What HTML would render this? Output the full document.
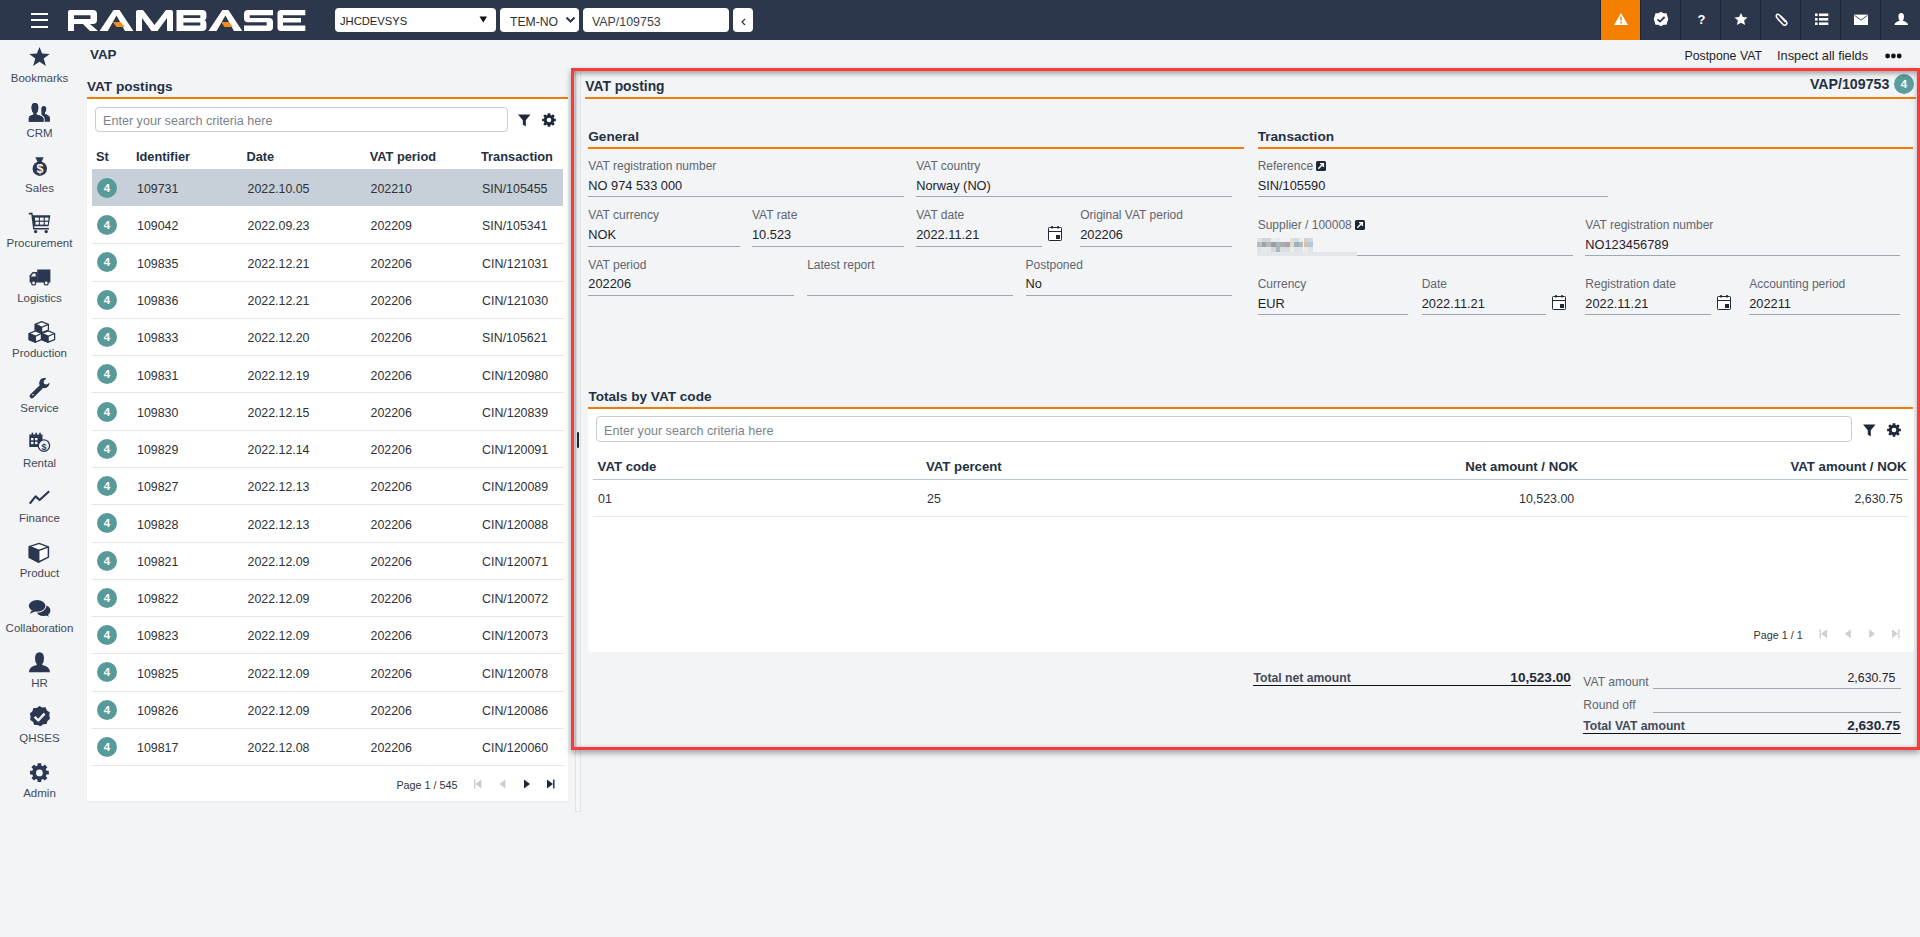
<!DOCTYPE html>
<html><head><meta charset="utf-8">
<style>
*{box-sizing:border-box;margin:0;padding:0}
html,body{width:1920px;height:937px;overflow:hidden;background:#f3f4f6;font-family:"Liberation Sans",sans-serif;color:#333}
.a{position:absolute}
.t{position:absolute;white-space:nowrap;line-height:20px;height:20px}
svg{position:absolute;overflow:visible}
#top{left:0;top:0;width:1920px;height:40px;background:#2d374b}
.sel{background:#fff;border-radius:4px;height:24px;top:8px}
.sep{top:0;width:1px;height:40px;background:#1f2838}
.badge{width:20px;height:20px;border-radius:50%;background:#58999a;color:#fff;font-weight:bold;font-size:11.5px;text-align:center;line-height:20px}
</style></head><body>
<div id="top" class="a">
  <!-- hamburger -->
  <div class="a" style="left:31px;top:13px;width:17px;height:2px;background:#fff"></div>
  <div class="a" style="left:31px;top:19px;width:17px;height:2px;background:#fff"></div>
  <div class="a" style="left:31px;top:26px;width:17px;height:2px;background:#fff"></div>
  <!-- logo -->
  <svg class="a" style="left:0;top:0" width="320" height="40" viewBox="0 0 320 40">
   <g fill="#fff">
    <!-- R -->
    <path d="M68 12 Q68 10 70 10 H93 Q97 10 97 14 V20 Q97 24 93 24 H90 L98 31 H90 L83 24 H74 V31 H68 Z M74 15.3 V19 H90.5 V15.3 Z" fill-rule="evenodd"/>
    <!-- A -->
    <path d="M99.6 31 L113.5 10 H119.5 L133.4 31 H125 L116.5 15.6 L107.8 31 Z"/>
    <!-- M -->
    <path d="M136 12 Q136 10 138 10 H143 L154.5 25 L166 10 H171 Q173 10 173 12 V31 H167 V18 L157.5 31 H151.5 L142 18 V31 H136 Z"/>
    <!-- B -->
    <path d="M176.5 10 H202 Q206.4 10 206.4 14 V17 Q206.4 20 204 20.3 Q206.4 20.6 206.4 24 V27 Q206.4 31 202 31 H176.5 Z M183.4 15.2 V17.9 H200.3 V15.2 Z M183.4 22.6 V25.6 H200.3 V22.6 Z" fill-rule="evenodd"/>
    <!-- A2 -->
    <path d="M208.4 31 L222.4 10 H228.4 L242.3 31 H234 L225.4 15.6 L216.6 31 Z"/>
    <!-- S -->
    <path d="M248 10 H273 V15.2 H249.7 V17.9 H269 Q273 17.9 273 22 V27 Q273 31 269 31 H244 V25.6 H266.7 V22.3 H248 Q244 22.3 244 18 V14 Q244 10 248 10 Z"/>
    <!-- E -->
    <path d="M281 10 H305.3 V15.2 H283 V17.9 H301 V22.6 H283 V25.6 H305.3 V31 H281 Q277.5 31 277.5 27.5 V13.5 Q277.5 10 281 10 Z"/>
   </g>
   <g fill="#f58a1f">
    <path d="M112.8 21.9 H120.5 L124.6 26.9 H116.5 Z"/>
    <path d="M221 21.9 H228.7 L232.8 26.9 H224.6 Z"/>
   </g>
  </svg>
  <!-- selects -->
  <div class="a sel" style="left:335px;width:161px"></div>
  <div class="t" style="left:340px;top:10.7px;font-size:11.2px;color:#222">JHCDEVSYS</div>
  <svg class="a" style="left:479px;top:16px" width="9" height="7"><path d="M0.5 0.5 H8 L4.25 6.5 Z" fill="#111"/></svg>
  <div class="a sel" style="left:500px;width:79px"></div>
  <div class="t" style="left:510px;top:12px;font-size:12.2px;color:#333">TEM-NO</div>
  <svg class="a" style="left:565px;top:16px" width="11" height="8"><path d="M1.5 1.5 L5.5 5.5 L9.5 1.5" stroke="#2c364a" stroke-width="2" fill="none"/></svg>
  <div class="a sel" style="left:583px;width:146px"></div>
  <div class="t" style="left:592px;top:12px;font-size:12.4px;color:#3a3f4a">VAP/109753</div>
  <div class="a sel" style="left:733px;width:20px"></div>
  <svg class="a" style="left:740px;top:18px" width="7" height="8"><path d="M5 1 L2 4 L5 7" stroke="#333" stroke-width="1.2" fill="none"/></svg>
  <!-- right icons -->
  <div class="a" style="left:1601px;top:0;width:39px;height:40px;background:#f58000"></div>
  <div class="a sep" style="left:1600px"></div>
  <div class="a sep" style="left:1640px"></div>
  <div class="a sep" style="left:1680px"></div>
  <div class="a sep" style="left:1720px"></div>
  <div class="a sep" style="left:1760px"></div>
  <div class="a sep" style="left:1800px"></div>
  <div class="a sep" style="left:1840px"></div>
  <div class="a sep" style="left:1880px"></div>
  <svg class="a" style="left:0;top:0" width="1920" height="40" viewBox="0 0 1920 40">
   <!-- warning -->
   <path d="M1621 12.9 L1628 25 H1614 Z" fill="#fff"/>
   <rect x="1620.2" y="16.5" width="1.6" height="4" fill="#f58000"/><rect x="1620.2" y="21.8" width="1.6" height="1.6" fill="#f58000"/>
   <!-- badge check -->
   <path d="M1661 11.8 L1663.6 13.3 L1666.5 13.2 L1667.3 16.1 L1668.3 19 L1667.3 21.9 L1666.5 24.8 L1663.6 24.7 L1661 26.2 L1658.4 24.7 L1655.5 24.8 L1654.7 21.9 L1653.8 19 L1654.7 16.1 L1655.5 13.2 L1658.4 13.3 Z" fill="#fff"/>
   <path d="M1657.5 19.3 L1660 21.6 L1664.6 17" stroke="#2c364a" stroke-width="1.8" fill="none"/>
   <!-- question -->
   <text x="1701.6" y="24" font-family="Liberation Sans" font-weight="bold" font-size="13" fill="#fff" text-anchor="middle">?</text>
   <!-- star -->
   <path d="M1741 13 L1742.9 17.1 L1747.5 17.6 L1744.1 20.6 L1745.1 25 L1741 22.7 L1736.9 25 L1737.9 20.6 L1734.5 17.6 L1739.1 17.1 Z" fill="#fff"/>
   <!-- paperclip -->
   <path d="M1785.5 22 L1779.5 15.2 Q1777 13 1776.3 15.6 Q1776 17 1777.5 18.5 L1783 24.5 Q1785 26 1786.3 24.5 Q1787.5 23 1786 21.3 L1780.5 15.8" stroke="#fff" stroke-width="1.6" fill="none"/>
   <!-- list -->
   <g fill="#fff"><rect x="1815" y="13.5" width="2.6" height="2.6"/><rect x="1815" y="18" width="2.6" height="2.6"/><rect x="1815" y="22.4" width="2.6" height="2.6"/>
   <rect x="1819" y="13.5" width="9.3" height="2.6"/><rect x="1819" y="18" width="9.3" height="2.6"/><rect x="1819" y="22.4" width="9.3" height="2.6"/></g>
   <!-- envelope -->
   <rect x="1854" y="14.6" width="14" height="10.4" fill="#fff"/>
   <path d="M1854.5 15.3 L1861 20.2 L1867.5 15.3" stroke="#2c364a" stroke-width="0.9" fill="none"/>
   <!-- person -->
   <path d="M1901.2 13 Q1904 13 1904 16.5 Q1904 19.5 1902.8 20.8 Q1907.8 22 1908 25 H1894.5 Q1894.7 22 1899.6 20.8 Q1898.4 19.5 1898.4 16.5 Q1898.4 13 1901.2 13 Z" fill="#fff"/>
  </svg>
</div>
<div class="t" style="left:0;width:79px;text-align:center;top:68.01px;font-size:11.5px;color:#3f4859">Bookmarks</div>
<div class="t" style="left:0;width:79px;text-align:center;top:123.01px;font-size:11.5px;color:#3f4859">CRM</div>
<div class="t" style="left:0;width:79px;text-align:center;top:178.01px;font-size:11.5px;color:#3f4859">Sales</div>
<div class="t" style="left:0;width:79px;text-align:center;top:233.01px;font-size:11.5px;color:#3f4859">Procurement</div>
<div class="t" style="left:0;width:79px;text-align:center;top:288.01px;font-size:11.5px;color:#3f4859">Logistics</div>
<div class="t" style="left:0;width:79px;text-align:center;top:343.01px;font-size:11.5px;color:#3f4859">Production</div>
<div class="t" style="left:0;width:79px;text-align:center;top:398.01px;font-size:11.5px;color:#3f4859">Service</div>
<div class="t" style="left:0;width:79px;text-align:center;top:453.01px;font-size:11.5px;color:#3f4859">Rental</div>
<div class="t" style="left:0;width:79px;text-align:center;top:508.01px;font-size:11.5px;color:#3f4859">Finance</div>
<div class="t" style="left:0;width:79px;text-align:center;top:563.01px;font-size:11.5px;color:#3f4859">Product</div>
<div class="t" style="left:0;width:79px;text-align:center;top:618.01px;font-size:11.5px;color:#3f4859">Collaboration</div>
<div class="t" style="left:0;width:79px;text-align:center;top:673.01px;font-size:11.5px;color:#3f4859">HR</div>
<div class="t" style="left:0;width:79px;text-align:center;top:728.01px;font-size:11.5px;color:#3f4859">QHSES</div>
<div class="t" style="left:0;width:79px;text-align:center;top:783.01px;font-size:11.5px;color:#3f4859">Admin</div>
<svg class="a" style="left:0;top:0" width="80" height="800" viewBox="0 0 80 800">
<g fill="#2b3750">
 <!-- star -->
 <path d="M39.5 47 L42.1 53.6 L49.7 53.9 L43.7 58.5 L45.9 66 L39.5 61.7 L33.1 66 L35.3 58.5 L29.3 53.9 L36.9 53.6 Z"/>
 <!-- CRM users -->
 <path d="M43.8 105.9 Q46.3 105.9 46.3 108.8 Q46.3 111.6 45 112.6 V113.8 L47.6 114.9 Q50 115.9 50 118.3 V121.7 H41.5 V114 Q41.3 111.5 41.3 108.8 Q41.3 105.9 43.8 105.9 Z"/>
 <path d="M28.8 121.7 V118.3 Q28.8 116.2 31 115.5 L33.6 114.6 V113.2 Q31.6 111.6 31.6 107.2 Q31.6 102.9 34.95 102.9 Q38.3 102.9 38.3 107.2 Q38.3 111.6 36.3 113.2 V114.6 L39.8 115.5 Q43.4 116.6 43.6 119 V121.7 Z" stroke="#f3f4f6" stroke-width="2.2" paint-order="stroke"/>
 <path d="M28.8 121.7 V118.3 Q28.8 116.2 31 115.5 L33.6 114.6 V113.2 Q31.6 111.6 31.6 107.2 Q31.6 102.9 34.95 102.9 Q38.3 102.9 38.3 107.2 Q38.3 111.6 36.3 113.2 V114.6 L39.8 115.5 Q43.4 116.6 43.6 119 V121.7 Z"/>
 <!-- Sales bag -->
 <path d="M35.4 157.2 H43.6 L41.6 162 H37.6 Z"/>
 <circle cx="39.8" cy="168.7" r="7.2"/>
 <!-- Cart -->
 <path d="M28.8 212.8 H32.3 L33 215.3 H50.4 L48.6 226.3 H34.2 L34.5 228 H49 V229.6 H33.2 L31.3 214.6 H28.8 Z"/>
 <circle cx="35.6" cy="231.6" r="1.7"/><circle cx="46.2" cy="231.6" r="1.7"/>
 <!-- Truck -->
 <path d="M37.2 269.5 H50.4 V282.5 H37.2 Z"/>
 <path d="M29.6 275.5 L32.6 272.1 H37.5 V282.5 H29.6 Z"/>
 <circle cx="33.6" cy="283" r="2.6"/><circle cx="46.2" cy="283" r="2.6"/>
 <!-- Wrench -->
 <path d="M31 394.6 L40.5 385.1 L42.9 387.5 L33.4 397 Q32.2 398.2 31 397 Q29.8 395.8 31 394.6 Z"/>
 <circle cx="44.3" cy="383.2" r="5.1"/><path d="M31.8 396.1 L40.6 387.5" stroke="#2b3750" stroke-width="4.4" stroke-linecap="round"/>
 <!-- Rental -->
 <path d="M29.3 434.6 H42.5 V440.5 Q38.6 442.5 38.5 447 H29.3 Z"/>
 <rect x="31.6" y="432.7" width="1.6" height="3" /><rect x="35.4" y="432.7" width="1.6" height="3"/><rect x="39.2" y="432.7" width="1.6" height="3"/>
 <circle cx="43.9" cy="445.6" r="5.7" fill="none" stroke="#2b3750" stroke-width="1.3"/>
 <!-- Finance -->
 <path d="M29.8 503.6 L35.6 496.4 L39.6 500 L49.2 491.2" fill="none" stroke="#2b3750" stroke-width="2.2" stroke-linejoin="round"/>
 <!-- Collaboration -->
 <ellipse cx="43.4" cy="610.5" rx="7" ry="5.6"/>
 <path d="M45 614.8 L48.8 616.7 L47.6 613.4 Z"/>
 <ellipse cx="37.15" cy="605.8" rx="8.35" ry="5.9" stroke="#f3f4f6" stroke-width="2" paint-order="stroke"/>
 <path d="M31.8 610.2 L29.8 613.8 L35.5 611.3 Z"/>
 <!-- HR -->
 <path d="M39.5 652.2 Q44 652.2 44 658.2 Q44 662.2 42.3 664 V665 Q49.9 666.6 49.9 672.2 H29 Q29 666.6 36.7 665 V664 Q35 662.2 35 658.2 Q35 652.2 39.5 652.2 Z"/>
 <!-- QHSES badge -->
 <path d="M39.4 705.9 L42.3 707.5 L45.6 707.3 L46.9 710.4 L49.7 712.3 L49.2 715.6 L50.1 718.8 L47.5 720.9 L46.5 724.1 L43.2 724.3 L40.6 726.3 L37.6 724.9 L34.3 724.9 L33 721.8 L30.2 719.9 L30.6 716.6 L29.8 713.4 L32.4 711.3 L33.4 708.1 L36.7 707.9 Z"/>
 <!-- Admin gear -->
 <path d="M37.56 765.54 L37.53 763.18 L41.27 763.18 L41.24 765.54 L43.09 766.30 L44.73 764.62 L47.38 767.27 L45.70 768.91 L46.46 770.76 L48.82 770.73 L48.82 774.47 L46.46 774.44 L45.70 776.29 L47.38 777.93 L44.73 780.58 L43.09 778.90 L41.24 779.66 L41.27 782.02 L37.53 782.02 L37.56 779.66 L35.71 778.90 L34.07 780.58 L31.42 777.93 L33.10 776.29 L32.34 774.44 L29.98 774.47 L29.98 770.73 L32.34 770.76 L33.10 768.91 L31.42 767.27 L34.07 764.62 L35.71 766.30 Z"/>
</g>
<!-- white details -->
<g fill="#f3f4f6">
 <circle cx="46.1" cy="382.2" r="2.4"/><path d="M44.4 380.4 L47.5 377 L51 380.6 L47.9 383.9 Z"/><circle cx="33" cy="394.7" r="0.8"/>
 <text x="39.9" y="173.3" font-family="Liberation Sans" font-weight="bold" font-size="12.5" text-anchor="middle" fill="#f3f4f6">$</text>
 <rect x="35" y="217.6" width="3.8" height="3" /><rect x="39.9" y="217.6" width="3.8" height="3"/><rect x="44.8" y="217.6" width="3.6" height="3"/>
 <rect x="35.5" y="221.8" width="3.4" height="2.8" /><rect x="39.9" y="221.8" width="3.8" height="2.8"/><rect x="44.8" y="221.8" width="3.2" height="2.8"/>
 <path d="M30.9 276.6 L33.1 273.4 H35.6 V276.6 Z"/>
 <circle cx="33.6" cy="283" r="1.4"/><circle cx="46.2" cy="283" r="1.4"/>
 <rect x="31" y="438" width="2.5" height="2.3"/><rect x="35" y="438" width="2.5" height="2.3"/><rect x="31" y="441.8" width="2.5" height="2.3"/><rect x="35" y="441.8" width="2.5" height="2.3"/>
 <path d="M39.6 534.6" />
</g>


<text x="43.9" y="449.6" font-family="Liberation Sans" font-weight="bold" font-size="9" text-anchor="middle" fill="#2b3750">$</text>
<path d="M34.6 716.8 L38.3 720.3 L44.6 713.6" fill="none" stroke="#f3f4f6" stroke-width="2.4"/>
<circle cx="39.4" cy="772.9" r="3.4" fill="#f3f4f6"/>
<polygon points="41.60,321.60 48.40,324.40 48.40,330.00 41.60,332.70 35.30,330.00 35.30,324.40" fill="#fff" stroke="#2b3750" stroke-width="1.3" stroke-linejoin="round"/><polygon points="35.30,324.40 41.60,327.30 41.60,332.70 35.30,330.00" fill="#2b3750" stroke="#2b3750" stroke-width="1.3" stroke-linejoin="round"/><polyline points="35.30,324.40 41.60,327.30 48.40,324.40" fill="none" stroke="#2b3750" stroke-width="1.3"/><polygon points="35.40,330.80 41.40,333.50 41.40,339.60 35.40,342.20 29.20,339.60 29.20,333.50" fill="#fff" stroke="#2b3750" stroke-width="1.3" stroke-linejoin="round"/><polygon points="29.20,333.50 35.40,336.30 35.40,342.20 29.20,339.60" fill="#2b3750" stroke="#2b3750" stroke-width="1.3" stroke-linejoin="round"/><polyline points="29.20,333.50 35.40,336.30 41.40,333.50" fill="none" stroke="#2b3750" stroke-width="1.3"/><polygon points="48.10,330.80 54.60,333.50 54.60,339.60 48.10,342.20 41.90,339.60 41.90,333.50" fill="#fff" stroke="#2b3750" stroke-width="1.3" stroke-linejoin="round"/><polygon points="41.90,333.50 48.10,336.30 48.10,342.20 41.90,339.60" fill="#2b3750" stroke="#2b3750" stroke-width="1.3" stroke-linejoin="round"/><polyline points="41.90,333.50 48.10,336.30 54.60,333.50" fill="none" stroke="#2b3750" stroke-width="1.3"/><polygon points="39.00,543.40 48.40,546.90 48.40,557.10 38.70,562.00 29.40,557.30 29.40,546.60" fill="#fff" stroke="#2b3750" stroke-width="1.5" stroke-linejoin="round"/><polygon points="29.40,546.60 38.70,550.50 38.70,562.00 29.40,557.30" fill="#2b3750" stroke="#2b3750" stroke-width="1.5" stroke-linejoin="round"/><polyline points="29.40,546.60 38.70,550.50 48.40,546.90" fill="none" stroke="#2b3750" stroke-width="1.5"/>
</svg>
<div class="t" style="left:90px;top:45.15px;font-size:13.4px;color:#243044;font-weight:bold;">VAP</div>
<div class="t" style="left:1684.5px;top:45.74px;font-size:12.3px;color:#1f1f1f;">Postpone VAT</div>
<div class="t" style="left:1777px;top:45.56px;font-size:12.8px;color:#1f1f1f;">Inspect all fields</div>
<svg class="a" style="left:1885px;top:53px" width="17" height="6"><circle cx="2.6" cy="3" r="2.4" fill="#111"/><circle cx="8.4" cy="3" r="2.4" fill="#111"/><circle cx="14.2" cy="3" r="2.4" fill="#111"/></svg>
<div class="t" style="left:87px;top:76.99px;font-size:13.6px;color:#243044;font-weight:bold;">VAT postings</div>
<div class="a" style="left:87px;top:97px;width:481.00px;height:2.00px;background:#f27b07"></div>
<div class="a" style="left:87px;top:99px;width:481.00px;height:702.00px;background:#fff;box-shadow:0 1px 2px rgba(0,0,0,.05)"></div>
<div class="a" style="left:95px;top:106.5px;width:412.50px;height:25.00px;background:#fff;border:1px solid #c9cdd2;border-radius:4px"></div>
<div class="t" style="left:103px;top:110.73px;font-size:12.6px;color:#7c828a;">Enter your search criteria here</div>
<svg class="a" style="left:517.5px;top:calc(120px - 6.5px)" width="13" height="13" viewBox="0 0 13 13"><path d="M0 0.5 H12.5 L7.8 6.2 V12.5 L4.8 10.5 V6.2 Z" fill="#1f2838"/></svg>
<svg class="a" style="left:542px;top:calc(120px - 7px)" width="14" height="14" viewBox="-7 -7 14 14"><path d="M-1.34 -5.13 L-1.37 -6.87 L1.37 -6.87 L1.34 -5.13 L2.68 -4.57 L3.89 -5.82 L5.82 -3.89 L4.57 -2.68 L5.13 -1.34 L6.87 -1.37 L6.87 1.37 L5.13 1.34 L4.57 2.68 L5.82 3.89 L3.89 5.82 L2.68 4.57 L1.34 5.13 L1.37 6.87 L-1.37 6.87 L-1.34 5.13 L-2.68 4.57 L-3.89 5.82 L-5.82 3.89 L-4.57 2.68 L-5.13 1.34 L-6.87 1.37 L-6.87 -1.37 L-5.13 -1.34 L-4.57 -2.68 L-5.82 -3.89 L-3.89 -5.82 L-2.68 -4.57 Z" fill="#1f2838"/><circle r="2.3" fill="#fff"/></svg>
<div class="t" style="left:96px;top:147.16px;font-size:12.8px;color:#243044;font-weight:bold;">St</div>
<div class="t" style="left:136px;top:147.16px;font-size:12.8px;color:#243044;font-weight:bold;">Identifier</div>
<div class="t" style="left:246.5px;top:147.16px;font-size:12.8px;color:#243044;font-weight:bold;">Date</div>
<div class="t" style="left:369.7px;top:147.16px;font-size:12.8px;color:#243044;font-weight:bold;">VAT period</div>
<div class="t" style="left:481px;top:147.16px;font-size:12.8px;color:#243044;font-weight:bold;">Transaction</div>
<div class="a" style="left:92px;top:169.0px;width:471.00px;height:36.97px;background:#c7cfd8"></div>
<div class="a badge" style="left:97px;top:177.90px">4</div>
<div class="t" style="left:137px;top:179.20px;font-size:12.4px;color:#2e3136;">109731</div>
<div class="t" style="left:247.5px;top:179.20px;font-size:12.4px;color:#2e3136;">2022.10.05</div>
<div class="t" style="left:370.5px;top:179.20px;font-size:12.4px;color:#2e3136;">202210</div>
<div class="t" style="left:482px;top:179.20px;font-size:12.4px;color:#2e3136;">SIN/105455</div>
<div class="a" style="left:92px;top:243.34000000000003px;width:471.50px;height:1.00px;background:#e4e7ea"></div>
<div class="a badge" style="left:97px;top:215.17px">4</div>
<div class="t" style="left:137px;top:216.47px;font-size:12.4px;color:#2e3136;">109042</div>
<div class="t" style="left:247.5px;top:216.47px;font-size:12.4px;color:#2e3136;">2022.09.23</div>
<div class="t" style="left:370.5px;top:216.47px;font-size:12.4px;color:#2e3136;">202209</div>
<div class="t" style="left:482px;top:216.47px;font-size:12.4px;color:#2e3136;">SIN/105341</div>
<div class="a" style="left:92px;top:280.61px;width:471.50px;height:1.00px;background:#e4e7ea"></div>
<div class="a badge" style="left:97px;top:252.44px">4</div>
<div class="t" style="left:137px;top:253.74px;font-size:12.4px;color:#2e3136;">109835</div>
<div class="t" style="left:247.5px;top:253.74px;font-size:12.4px;color:#2e3136;">2022.12.21</div>
<div class="t" style="left:370.5px;top:253.74px;font-size:12.4px;color:#2e3136;">202206</div>
<div class="t" style="left:482px;top:253.74px;font-size:12.4px;color:#2e3136;">CIN/121031</div>
<div class="a" style="left:92px;top:317.88px;width:471.50px;height:1.00px;background:#e4e7ea"></div>
<div class="a badge" style="left:97px;top:289.71px">4</div>
<div class="t" style="left:137px;top:291.01px;font-size:12.4px;color:#2e3136;">109836</div>
<div class="t" style="left:247.5px;top:291.01px;font-size:12.4px;color:#2e3136;">2022.12.21</div>
<div class="t" style="left:370.5px;top:291.01px;font-size:12.4px;color:#2e3136;">202206</div>
<div class="t" style="left:482px;top:291.01px;font-size:12.4px;color:#2e3136;">CIN/121030</div>
<div class="a" style="left:92px;top:355.15000000000003px;width:471.50px;height:1.00px;background:#e4e7ea"></div>
<div class="a badge" style="left:97px;top:326.98px">4</div>
<div class="t" style="left:137px;top:328.28px;font-size:12.4px;color:#2e3136;">109833</div>
<div class="t" style="left:247.5px;top:328.28px;font-size:12.4px;color:#2e3136;">2022.12.20</div>
<div class="t" style="left:370.5px;top:328.28px;font-size:12.4px;color:#2e3136;">202206</div>
<div class="t" style="left:482px;top:328.28px;font-size:12.4px;color:#2e3136;">SIN/105621</div>
<div class="a" style="left:92px;top:392.42px;width:471.50px;height:1.00px;background:#e4e7ea"></div>
<div class="a badge" style="left:97px;top:364.25px">4</div>
<div class="t" style="left:137px;top:365.55px;font-size:12.4px;color:#2e3136;">109831</div>
<div class="t" style="left:247.5px;top:365.55px;font-size:12.4px;color:#2e3136;">2022.12.19</div>
<div class="t" style="left:370.5px;top:365.55px;font-size:12.4px;color:#2e3136;">202206</div>
<div class="t" style="left:482px;top:365.55px;font-size:12.4px;color:#2e3136;">CIN/120980</div>
<div class="a" style="left:92px;top:429.69px;width:471.50px;height:1.00px;background:#e4e7ea"></div>
<div class="a badge" style="left:97px;top:401.52px">4</div>
<div class="t" style="left:137px;top:402.82px;font-size:12.4px;color:#2e3136;">109830</div>
<div class="t" style="left:247.5px;top:402.82px;font-size:12.4px;color:#2e3136;">2022.12.15</div>
<div class="t" style="left:370.5px;top:402.82px;font-size:12.4px;color:#2e3136;">202206</div>
<div class="t" style="left:482px;top:402.82px;font-size:12.4px;color:#2e3136;">CIN/120839</div>
<div class="a" style="left:92px;top:466.96000000000004px;width:471.50px;height:1.00px;background:#e4e7ea"></div>
<div class="a badge" style="left:97px;top:438.79px">4</div>
<div class="t" style="left:137px;top:440.09px;font-size:12.4px;color:#2e3136;">109829</div>
<div class="t" style="left:247.5px;top:440.09px;font-size:12.4px;color:#2e3136;">2022.12.14</div>
<div class="t" style="left:370.5px;top:440.09px;font-size:12.4px;color:#2e3136;">202206</div>
<div class="t" style="left:482px;top:440.09px;font-size:12.4px;color:#2e3136;">CIN/120091</div>
<div class="a" style="left:92px;top:504.23px;width:471.50px;height:1.00px;background:#e4e7ea"></div>
<div class="a badge" style="left:97px;top:476.06px">4</div>
<div class="t" style="left:137px;top:477.36px;font-size:12.4px;color:#2e3136;">109827</div>
<div class="t" style="left:247.5px;top:477.36px;font-size:12.4px;color:#2e3136;">2022.12.13</div>
<div class="t" style="left:370.5px;top:477.36px;font-size:12.4px;color:#2e3136;">202206</div>
<div class="t" style="left:482px;top:477.36px;font-size:12.4px;color:#2e3136;">CIN/120089</div>
<div class="a" style="left:92px;top:541.5px;width:471.50px;height:1.00px;background:#e4e7ea"></div>
<div class="a badge" style="left:97px;top:513.33px">4</div>
<div class="t" style="left:137px;top:514.63px;font-size:12.4px;color:#2e3136;">109828</div>
<div class="t" style="left:247.5px;top:514.63px;font-size:12.4px;color:#2e3136;">2022.12.13</div>
<div class="t" style="left:370.5px;top:514.63px;font-size:12.4px;color:#2e3136;">202206</div>
<div class="t" style="left:482px;top:514.63px;font-size:12.4px;color:#2e3136;">CIN/120088</div>
<div class="a" style="left:92px;top:578.77px;width:471.50px;height:1.00px;background:#e4e7ea"></div>
<div class="a badge" style="left:97px;top:550.60px">4</div>
<div class="t" style="left:137px;top:551.90px;font-size:12.4px;color:#2e3136;">109821</div>
<div class="t" style="left:247.5px;top:551.90px;font-size:12.4px;color:#2e3136;">2022.12.09</div>
<div class="t" style="left:370.5px;top:551.90px;font-size:12.4px;color:#2e3136;">202206</div>
<div class="t" style="left:482px;top:551.90px;font-size:12.4px;color:#2e3136;">CIN/120071</div>
<div class="a" style="left:92px;top:616.04px;width:471.50px;height:1.00px;background:#e4e7ea"></div>
<div class="a badge" style="left:97px;top:587.87px">4</div>
<div class="t" style="left:137px;top:589.17px;font-size:12.4px;color:#2e3136;">109822</div>
<div class="t" style="left:247.5px;top:589.17px;font-size:12.4px;color:#2e3136;">2022.12.09</div>
<div class="t" style="left:370.5px;top:589.17px;font-size:12.4px;color:#2e3136;">202206</div>
<div class="t" style="left:482px;top:589.17px;font-size:12.4px;color:#2e3136;">CIN/120072</div>
<div class="a" style="left:92px;top:653.31px;width:471.50px;height:1.00px;background:#e4e7ea"></div>
<div class="a badge" style="left:97px;top:625.14px">4</div>
<div class="t" style="left:137px;top:626.44px;font-size:12.4px;color:#2e3136;">109823</div>
<div class="t" style="left:247.5px;top:626.44px;font-size:12.4px;color:#2e3136;">2022.12.09</div>
<div class="t" style="left:370.5px;top:626.44px;font-size:12.4px;color:#2e3136;">202206</div>
<div class="t" style="left:482px;top:626.44px;font-size:12.4px;color:#2e3136;">CIN/120073</div>
<div class="a" style="left:92px;top:690.5799999999999px;width:471.50px;height:1.00px;background:#e4e7ea"></div>
<div class="a badge" style="left:97px;top:662.41px">4</div>
<div class="t" style="left:137px;top:663.71px;font-size:12.4px;color:#2e3136;">109825</div>
<div class="t" style="left:247.5px;top:663.71px;font-size:12.4px;color:#2e3136;">2022.12.09</div>
<div class="t" style="left:370.5px;top:663.71px;font-size:12.4px;color:#2e3136;">202206</div>
<div class="t" style="left:482px;top:663.71px;font-size:12.4px;color:#2e3136;">CIN/120078</div>
<div class="a" style="left:92px;top:727.85px;width:471.50px;height:1.00px;background:#e4e7ea"></div>
<div class="a badge" style="left:97px;top:699.68px">4</div>
<div class="t" style="left:137px;top:700.98px;font-size:12.4px;color:#2e3136;">109826</div>
<div class="t" style="left:247.5px;top:700.98px;font-size:12.4px;color:#2e3136;">2022.12.09</div>
<div class="t" style="left:370.5px;top:700.98px;font-size:12.4px;color:#2e3136;">202206</div>
<div class="t" style="left:482px;top:700.98px;font-size:12.4px;color:#2e3136;">CIN/120086</div>
<div class="a" style="left:92px;top:765.12px;width:471.50px;height:1.00px;background:#e4e7ea"></div>
<div class="a badge" style="left:97px;top:736.95px">4</div>
<div class="t" style="left:137px;top:738.25px;font-size:12.4px;color:#2e3136;">109817</div>
<div class="t" style="left:247.5px;top:738.25px;font-size:12.4px;color:#2e3136;">2022.12.08</div>
<div class="t" style="left:370.5px;top:738.25px;font-size:12.4px;color:#2e3136;">202206</div>
<div class="t" style="left:482px;top:738.25px;font-size:12.4px;color:#2e3136;">CIN/120060</div>
<div class="t" style="left:396.4px;top:775.06px;font-size:10.8px;color:#333;">Page 1 / 545</div>
<svg class="a" style="left:0;top:0" width="1" height="1">
<g transform="translate(478,784)"><rect x="-4" y="-4.5" width="1.4" height="9" fill="#c9cdd3"/><path d="M3.5 -4.5 V4.5 L-2.5 0 Z" fill="#c9cdd3"/></g>
<g transform="translate(503,784)"><path d="M2.5 -4.5 V4.5 L-3.5 0 Z" fill="#c9cdd3"/></g>
<g transform="translate(526.5,784)"><path d="M-2.5 -4.5 V4.5 L3.5 0 Z" fill="#1f2838"/></g>
<g transform="translate(550.5,784)"><rect x="2.6" y="-4.5" width="1.4" height="9" fill="#1f2838"/><path d="M-3.5 -4.5 V4.5 L2.5 0 Z" fill="#1f2838"/></g>
</svg>
<div class="a" style="left:575px;top:70px;width:6.00px;height:742.00px;background:#f5f6f8;border:1px solid #dfe2e6"></div>
<div class="a" style="left:577px;top:432px;width:2.00px;height:16.00px;background:#1f2838;border-radius:1px"></div>
<div class="t" style="left:585.3px;top:76.72px;font-size:13.8px;color:#243044;font-weight:bold;">VAT posting</div>
<div class="a" style="left:585px;top:97px;width:1331.00px;height:2.00px;background:#f27b07"></div>
<div class="t" style="right:30.700000000000045px;top:73.88px;font-size:14.2px;color:#243044;font-weight:bold;">VAP/109753</div>
<div class="a badge" style="left:1894px;top:74px;background:#5b9d9a">4</div>
<div class="t" style="left:588.3px;top:126.89px;font-size:13.6px;color:#243044;font-weight:bold;">General</div>
<div class="a" style="left:588px;top:147px;width:656.00px;height:2.00px;background:#f27b07"></div>
<div class="t" style="left:1257.7px;top:126.89px;font-size:13.6px;color:#243044;font-weight:bold;">Transaction</div>
<div class="a" style="left:1257.7px;top:147px;width:655.30px;height:2.00px;background:#f27b07"></div>
<div class="t" style="left:588.3px;top:156.34px;font-size:12px;color:#5f656e;">VAT registration number</div>
<div class="t" style="left:588.3px;top:176.06px;font-size:12.8px;color:#1e222b;">NO 974 533 000</div>
<div class="a" style="left:588.3px;top:196.39999999999998px;width:315.50px;height:1.00px;background:#9aa8b8"></div>
<div class="t" style="left:916.2px;top:156.34px;font-size:12px;color:#5f656e;">VAT country</div>
<div class="t" style="left:916.2px;top:176.06px;font-size:12.8px;color:#1e222b;">Norway (NO)</div>
<div class="a" style="left:916.2px;top:196.39999999999998px;width:315.80px;height:1.00px;background:#9aa8b8"></div>
<div class="t" style="left:588.3px;top:205.44px;font-size:12px;color:#5f656e;">VAT currency</div>
<div class="t" style="left:588.3px;top:225.16px;font-size:12.8px;color:#1e222b;">NOK</div>
<div class="a" style="left:588.3px;top:245.5px;width:151.40px;height:1.00px;background:#9aa8b8"></div>
<div class="t" style="left:752px;top:205.44px;font-size:12px;color:#5f656e;">VAT rate</div>
<div class="t" style="left:752px;top:225.16px;font-size:12.8px;color:#1e222b;">10.523</div>
<div class="a" style="left:752px;top:245.5px;width:152.00px;height:1.00px;background:#9aa8b8"></div>
<div class="t" style="left:916.2px;top:205.44px;font-size:12px;color:#5f656e;">VAT date</div>
<div class="t" style="left:916.2px;top:225.16px;font-size:12.8px;color:#1e222b;">2022.11.21</div>
<div class="a" style="left:916.2px;top:245.5px;width:125.80px;height:1.00px;background:#9aa8b8"></div>
<svg class="a" style="left:1048px;top:226px" width="15" height="16" viewBox="0 0 15 16"><rect x="0.5" y="1.5" width="13" height="13" rx="0.8" fill="#fff" stroke="#1f2838" stroke-width="1"/><path d="M0.5 5.5 H13.5" stroke="#1f2838" stroke-width="1"/><rect x="3.2" y="0" width="1.8" height="2.6" rx="0.6" fill="#1f2838"/><rect x="9.2" y="0" width="1.8" height="2.6" rx="0.6" fill="#1f2838"/><rect x="8" y="9" width="4" height="4" fill="#1f2838"/></svg>
<div class="t" style="left:1080.2px;top:205.44px;font-size:12px;color:#5f656e;">Original VAT period</div>
<div class="t" style="left:1080.2px;top:225.16px;font-size:12.8px;color:#1e222b;">202206</div>
<div class="a" style="left:1080.2px;top:245.5px;width:151.80px;height:1.00px;background:#9aa8b8"></div>
<div class="t" style="left:588.3px;top:254.54px;font-size:12px;color:#5f656e;">VAT period</div>
<div class="t" style="left:588.3px;top:274.26px;font-size:12.8px;color:#1e222b;">202206</div>
<div class="a" style="left:588.3px;top:294.59999999999997px;width:206.10px;height:1.00px;background:#9aa8b8"></div>
<div class="t" style="left:807.2px;top:254.54px;font-size:12px;color:#5f656e;">Latest report</div>
<div class="a" style="left:807.2px;top:294.59999999999997px;width:206.00px;height:1.00px;background:#9aa8b8"></div>
<div class="t" style="left:1025.5px;top:254.54px;font-size:12px;color:#5f656e;">Postponed</div>
<div class="t" style="left:1025.5px;top:274.26px;font-size:12.8px;color:#1e222b;">No</div>
<div class="a" style="left:1025.5px;top:294.59999999999997px;width:206.50px;height:1.00px;background:#9aa8b8"></div>
<div class="t" style="left:1257.7px;top:156.24px;font-size:12px;color:#5f656e;">Reference</div>
<svg class="a" style="left:1316.1px;top:161.0px" width="10" height="10" viewBox="0 0 10 10"><rect x="0" y="0" width="10" height="10" rx="1.5" fill="#1f2838"/><path d="M2.3 7.7 L7 3 M4 2.6 H7.4 V6" stroke="#fff" stroke-width="1.4" fill="none"/></svg>
<div class="t" style="left:1257.7px;top:175.96px;font-size:12.8px;color:#1e222b;">SIN/105590</div>
<div class="a" style="left:1257.7px;top:196.29999999999998px;width:350.60px;height:1.00px;background:#9aa8b8"></div>
<div class="t" style="left:1257.7px;top:215.24px;font-size:12px;color:#5f656e;">Supplier / 100008</div>
<svg class="a" style="left:1354.8px;top:220.0px" width="10" height="10" viewBox="0 0 10 10"><rect x="0" y="0" width="10" height="10" rx="1.5" fill="#1f2838"/><path d="M2.3 7.7 L7 3 M4 2.6 H7.4 V6" stroke="#fff" stroke-width="1.4" fill="none"/></svg>
<div class="a" style="left:1257.7px;top:255.29999999999998px;width:315.20px;height:1.00px;background:#9aa8b8"></div>
<div class="a" style="left:1257.2px;top:238px;width:4.63px;height:4.20px;background:#dfe1e4"></div>
<div class="a" style="left:1261.83px;top:238px;width:4.63px;height:4.20px;background:#d2d4d7"></div>
<div class="a" style="left:1266.46px;top:238px;width:4.63px;height:4.20px;background:#d7d5d5"></div>
<div class="a" style="left:1271.09px;top:238px;width:4.63px;height:4.20px;background:#eceef0"></div>
<div class="a" style="left:1275.72px;top:238px;width:4.63px;height:4.20px;background:#e7e9eb"></div>
<div class="a" style="left:1280.35px;top:238px;width:4.63px;height:4.20px;background:#eff0f2"></div>
<div class="a" style="left:1284.98px;top:238px;width:4.63px;height:4.20px;background:#f1f2f4"></div>
<div class="a" style="left:1289.61px;top:238px;width:4.63px;height:4.20px;background:#e4ded7"></div>
<div class="a" style="left:1294.24px;top:238px;width:4.63px;height:4.20px;background:#d7dde3"></div>
<div class="a" style="left:1298.87px;top:238px;width:4.63px;height:4.20px;background:#e7eaed"></div>
<div class="a" style="left:1303.5px;top:238px;width:4.63px;height:4.20px;background:#d8cec4"></div>
<div class="a" style="left:1308.13px;top:238px;width:4.63px;height:4.20px;background:#ccd8e2"></div>
<div class="a" style="left:1257.2px;top:242.2px;width:4.63px;height:4.80px;background:#b7bfc5"></div>
<div class="a" style="left:1261.83px;top:242.2px;width:4.63px;height:4.80px;background:#9ca3ab"></div>
<div class="a" style="left:1266.46px;top:242.2px;width:4.63px;height:4.80px;background:#b3bbbe"></div>
<div class="a" style="left:1271.09px;top:242.2px;width:4.63px;height:4.80px;background:#9b9ca9"></div>
<div class="a" style="left:1275.72px;top:242.2px;width:4.63px;height:4.80px;background:#a7b5c1"></div>
<div class="a" style="left:1280.35px;top:242.2px;width:4.63px;height:4.80px;background:#abadb1"></div>
<div class="a" style="left:1284.98px;top:242.2px;width:4.63px;height:4.80px;background:#a8a4ac"></div>
<div class="a" style="left:1289.61px;top:242.2px;width:4.63px;height:4.80px;background:#e1d7cb"></div>
<div class="a" style="left:1294.24px;top:242.2px;width:4.63px;height:4.80px;background:#9eafbf"></div>
<div class="a" style="left:1298.87px;top:242.2px;width:4.63px;height:4.80px;background:#b3b9be"></div>
<div class="a" style="left:1303.5px;top:242.2px;width:4.63px;height:4.80px;background:#d5c1a9"></div>
<div class="a" style="left:1308.13px;top:242.2px;width:4.63px;height:4.80px;background:#b6c8d7"></div>
<div class="a" style="left:1257.2px;top:247px;width:4.63px;height:4.70px;background:#e3e1df"></div>
<div class="a" style="left:1261.83px;top:247px;width:4.63px;height:4.70px;background:#e7e9eb"></div>
<div class="a" style="left:1266.46px;top:247px;width:4.63px;height:4.70px;background:#e5e7e9"></div>
<div class="a" style="left:1271.09px;top:247px;width:4.63px;height:4.70px;background:#d7d7d9"></div>
<div class="a" style="left:1275.72px;top:247px;width:4.63px;height:4.70px;background:#a9b8c4"></div>
<div class="a" style="left:1280.35px;top:247px;width:4.63px;height:4.70px;background:#dbdcdf"></div>
<div class="a" style="left:1284.98px;top:247px;width:4.63px;height:4.70px;background:#dcdde1"></div>
<div class="a" style="left:1289.61px;top:247px;width:4.63px;height:4.70px;background:#efebe5"></div>
<div class="a" style="left:1294.24px;top:247px;width:4.63px;height:4.70px;background:#e1e3e6"></div>
<div class="a" style="left:1298.87px;top:247px;width:4.63px;height:4.70px;background:#e1e3e6"></div>
<div class="a" style="left:1303.5px;top:247px;width:4.63px;height:4.70px;background:#edeae4"></div>
<div class="a" style="left:1308.13px;top:247px;width:4.63px;height:4.70px;background:#dfe3e7"></div>
<div class="a" style="left:1257.2px;top:251.7px;width:99.80px;height:4.60px;background:#e3e7eb"></div>
<div class="t" style="left:1585.3px;top:215.24px;font-size:12px;color:#5f656e;">VAT registration number</div>
<div class="t" style="left:1585.3px;top:234.96px;font-size:12.8px;color:#1e222b;">NO123456789</div>
<div class="a" style="left:1585.3px;top:255.29999999999998px;width:315.10px;height:1.00px;background:#9aa8b8"></div>
<div class="t" style="left:1257.7px;top:274.34px;font-size:12px;color:#5f656e;">Currency</div>
<div class="t" style="left:1257.7px;top:294.06px;font-size:12.8px;color:#1e222b;">EUR</div>
<div class="a" style="left:1257.7px;top:314.4px;width:150.50px;height:1.00px;background:#9aa8b8"></div>
<div class="t" style="left:1421.7px;top:274.34px;font-size:12px;color:#5f656e;">Date</div>
<div class="t" style="left:1421.7px;top:294.06px;font-size:12.8px;color:#1e222b;">2022.11.21</div>
<div class="a" style="left:1421.7px;top:314.4px;width:124.60px;height:1.00px;background:#9aa8b8"></div>
<svg class="a" style="left:1552px;top:295px" width="15" height="16" viewBox="0 0 15 16"><rect x="0.5" y="1.5" width="13" height="13" rx="0.8" fill="#fff" stroke="#1f2838" stroke-width="1"/><path d="M0.5 5.5 H13.5" stroke="#1f2838" stroke-width="1"/><rect x="3.2" y="0" width="1.8" height="2.6" rx="0.6" fill="#1f2838"/><rect x="9.2" y="0" width="1.8" height="2.6" rx="0.6" fill="#1f2838"/><rect x="8" y="9" width="4" height="4" fill="#1f2838"/></svg>
<div class="t" style="left:1585.3px;top:274.34px;font-size:12px;color:#5f656e;">Registration date</div>
<div class="t" style="left:1585.3px;top:294.06px;font-size:12.8px;color:#1e222b;">2022.11.21</div>
<div class="a" style="left:1585.3px;top:314.4px;width:125.70px;height:1.00px;background:#9aa8b8"></div>
<svg class="a" style="left:1717px;top:295px" width="15" height="16" viewBox="0 0 15 16"><rect x="0.5" y="1.5" width="13" height="13" rx="0.8" fill="#fff" stroke="#1f2838" stroke-width="1"/><path d="M0.5 5.5 H13.5" stroke="#1f2838" stroke-width="1"/><rect x="3.2" y="0" width="1.8" height="2.6" rx="0.6" fill="#1f2838"/><rect x="9.2" y="0" width="1.8" height="2.6" rx="0.6" fill="#1f2838"/><rect x="8" y="9" width="4" height="4" fill="#1f2838"/></svg>
<div class="t" style="left:1749.2px;top:274.34px;font-size:12px;color:#5f656e;">Accounting period</div>
<div class="t" style="left:1749.2px;top:294.06px;font-size:12.8px;color:#1e222b;">202211</div>
<div class="a" style="left:1749.2px;top:314.4px;width:151.20px;height:1.00px;background:#9aa8b8"></div>
<div class="t" style="left:588.4px;top:387.39px;font-size:13.6px;color:#243044;font-weight:bold;">Totals by VAT code</div>
<div class="a" style="left:588px;top:407px;width:1325.00px;height:2.00px;background:#f27b07"></div>
<div class="a" style="left:588px;top:409px;width:1326.00px;height:243.00px;background:#fff;border-radius:0 0 4px 4px"></div>
<div class="a" style="left:596px;top:416px;width:1256.00px;height:25.70px;background:#fff;border:1px solid #c9cdd2;border-radius:4px"></div>
<div class="t" style="left:604px;top:420.93px;font-size:12.6px;color:#7c828a;">Enter your search criteria here</div>
<svg class="a" style="left:1862.5px;top:calc(430px - 6.5px)" width="13" height="13" viewBox="0 0 13 13"><path d="M0 0.5 H12.5 L7.8 6.2 V12.5 L4.8 10.5 V6.2 Z" fill="#1f2838"/></svg>
<svg class="a" style="left:1887px;top:calc(430px - 7px)" width="14" height="14" viewBox="-7 -7 14 14"><path d="M-1.34 -5.13 L-1.37 -6.87 L1.37 -6.87 L1.34 -5.13 L2.68 -4.57 L3.89 -5.82 L5.82 -3.89 L4.57 -2.68 L5.13 -1.34 L6.87 -1.37 L6.87 1.37 L5.13 1.34 L4.57 2.68 L5.82 3.89 L3.89 5.82 L2.68 4.57 L1.34 5.13 L1.37 6.87 L-1.37 6.87 L-1.34 5.13 L-2.68 4.57 L-3.89 5.82 L-5.82 3.89 L-4.57 2.68 L-5.13 1.34 L-6.87 1.37 L-6.87 -1.37 L-5.13 -1.34 L-4.57 -2.68 L-5.82 -3.89 L-3.89 -5.82 L-2.68 -4.57 Z" fill="#1f2838"/><circle r="2.3" fill="#fff"/></svg>
<div class="t" style="left:597.6px;top:456.92px;font-size:13.2px;color:#243044;font-weight:bold;">VAT code</div>
<div class="t" style="left:926px;top:456.92px;font-size:13.2px;color:#243044;font-weight:bold;">VAT percent</div>
<div class="t" style="right:342px;top:456.92px;font-size:13.2px;color:#243044;font-weight:bold;">Net amount / NOK</div>
<div class="t" style="right:13.5px;top:456.92px;font-size:13.2px;color:#243044;font-weight:bold;">VAT amount / NOK</div>
<div class="a" style="left:593px;top:479.3px;width:1315.00px;height:1.00px;background:#bcc6d1"></div>
<div class="t" style="left:598px;top:489.40px;font-size:12.4px;color:#2e3136;">01</div>
<div class="t" style="left:927px;top:489.40px;font-size:12.4px;color:#2e3136;">25</div>
<div class="t" style="right:345.79999999999995px;top:489.40px;font-size:12.4px;color:#2e3136;">10,523.00</div>
<div class="t" style="right:17.299999999999955px;top:489.40px;font-size:12.4px;color:#2e3136;">2,630.75</div>
<div class="a" style="left:593px;top:516px;width:1315.00px;height:1.00px;background:#e6e9ec"></div>
<div class="t" style="left:1753.6px;top:624.66px;font-size:10.8px;color:#333;">Page 1 / 1</div>
<svg class="a" style="left:0;top:0" width="1" height="1">
<g transform="translate(1823.5,633.8)"><rect x="-4" y="-4.5" width="1.4" height="9" fill="#cdd1d6"/><path d="M3.5 -4.5 V4.5 L-2.5 0 Z" fill="#cdd1d6"/></g>
<g transform="translate(1848.3,633.8)"><path d="M2.5 -4.5 V4.5 L-3.5 0 Z" fill="#cdd1d6"/></g>
<g transform="translate(1871.6,633.8)"><path d="M-2.5 -4.5 V4.5 L3.5 0 Z" fill="#cdd1d6"/></g>
<g transform="translate(1895.5,633.8)"><rect x="2.6" y="-4.5" width="1.4" height="9" fill="#cdd1d6"/><path d="M-3.5 -4.5 V4.5 L2.5 0 Z" fill="#cdd1d6"/></g>
</svg>
<div class="t" style="left:1253.5px;top:668.47px;font-size:12.2px;color:#434b5b;font-weight:bold;">Total net amount</div>
<div class="t" style="right:349.20000000000005px;top:667.99px;font-size:13.6px;color:#1f2838;font-weight:bold;">10,523.00</div>
<div class="a" style="left:1253px;top:685px;width:318.00px;height:1.00px;background:#111"></div>
<div class="t" style="left:1583.3px;top:671.61px;font-size:12.1px;color:#5f656e;">VAT amount</div>
<div class="t" style="right:24.59999999999991px;top:668.14px;font-size:12.3px;color:#1e222b;">2,630.75</div>
<div class="a" style="left:1653px;top:688px;width:248.00px;height:1.00px;background:#9aa8b8"></div>
<div class="t" style="left:1583.3px;top:695.36px;font-size:12.1px;color:#5f656e;">Round off</div>
<div class="a" style="left:1653px;top:712px;width:248.00px;height:1.00px;background:#9aa8b8"></div>
<div class="t" style="left:1583.3px;top:716.37px;font-size:12.2px;color:#434b5b;font-weight:bold;">Total VAT amount</div>
<div class="t" style="right:19.90000000000009px;top:715.69px;font-size:13.6px;color:#1f2838;font-weight:bold;">2,630.75</div>
<div class="a" style="left:1583px;top:733px;width:318.00px;height:1.00px;background:#111"></div>
<div class="a" style="left:571px;top:68px;width:1349.00px;height:682.00px;border:3px solid #fc3a3b;box-shadow:0 3px 6px rgba(0,0,0,.35), inset 0 3px 5px rgba(0,0,0,.28), inset 3px 0 4px rgba(0,0,0,.12)"></div>
</body></html>
